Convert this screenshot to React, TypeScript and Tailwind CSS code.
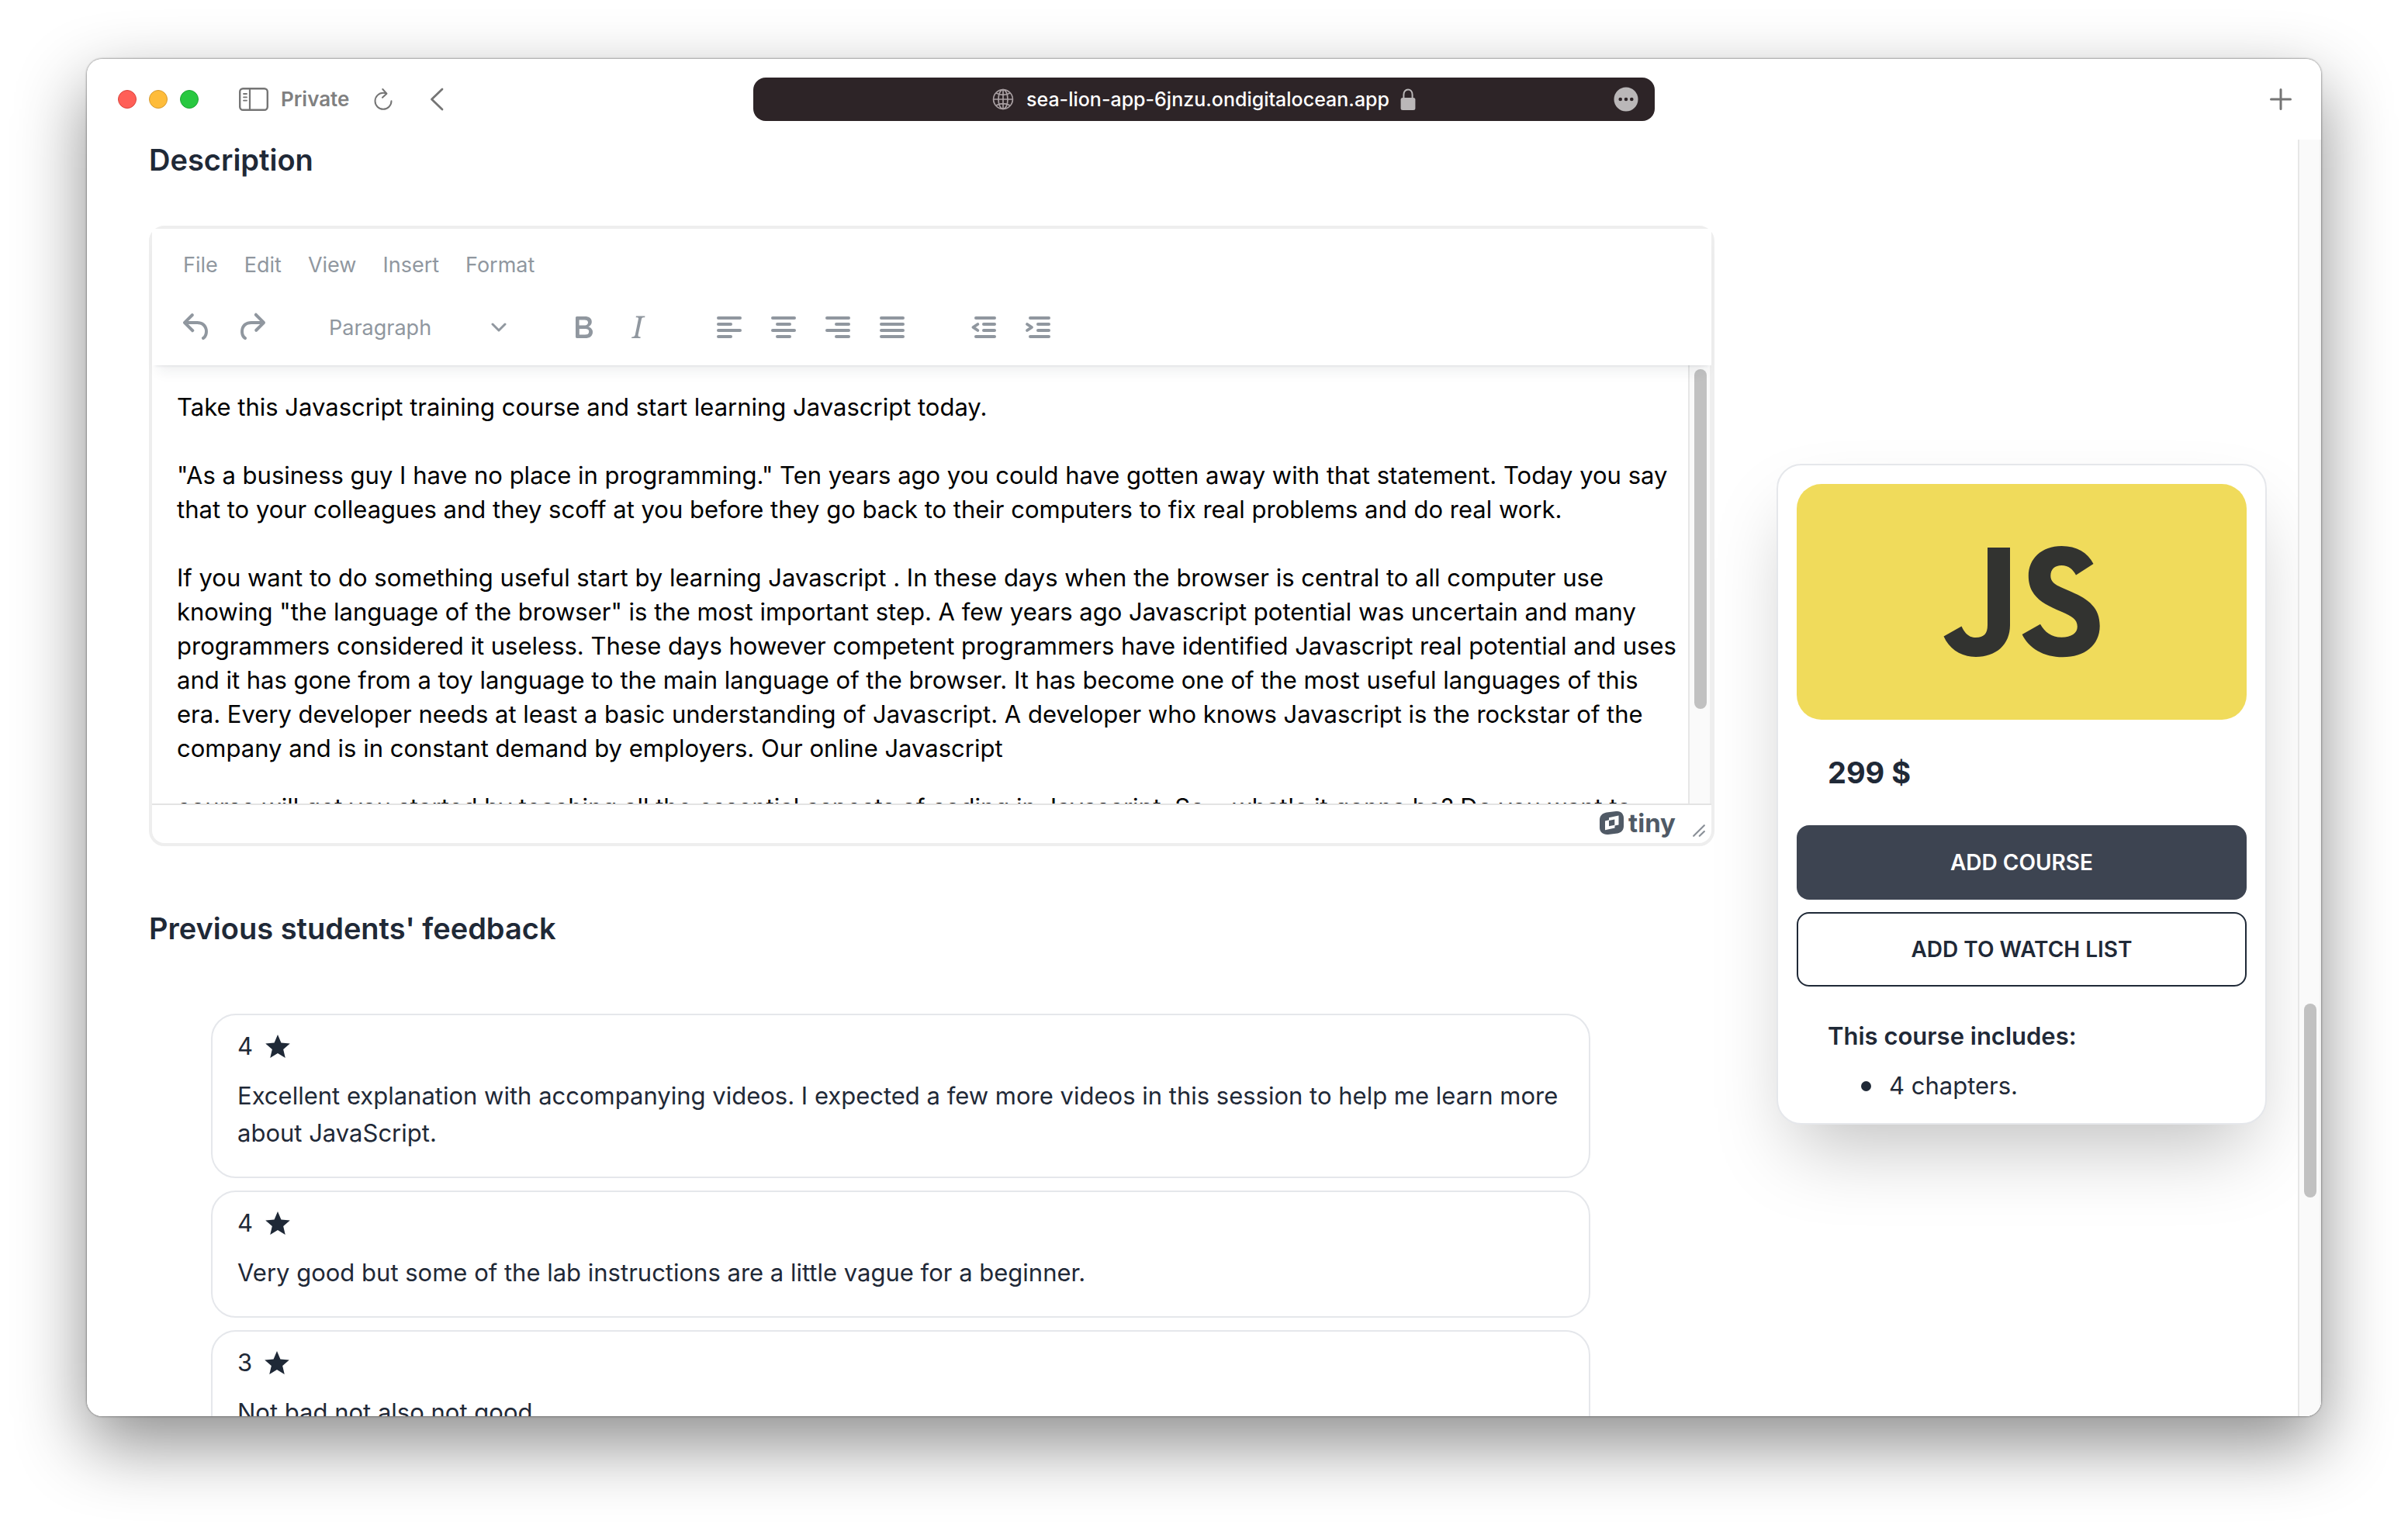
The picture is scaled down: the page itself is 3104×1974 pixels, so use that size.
import React from "react";

type Review = { rating: number; lines: string[] };

const reviews: Review[] = [
  {
    rating: 4,
    lines: [
      "Excellent explanation with accompanying videos. I expected a few more videos in this session to help me learn more",
      "about JavaScript.",
    ],
  },
  { rating: 4, lines: ["Very good but some of the lab instructions are a little vague for a beginner."] },
  { rating: 3, lines: ["Not bad not also not good."] },
];

const firstParagraph = [
  "Take this Javascript training course and start learning Javascript today.",
  "",
  "\"As a business guy I have no place in programming.\" Ten years ago you could have gotten away with that statement. Today you say",
  "that to your colleagues and they scoff at you before they go back to their computers to fix real problems and do real work.",
  "",
  "If you want to do something useful start by learning Javascript . In these days when the browser is central to all computer use",
  "knowing \"the language of the browser\" is the most important step. A few years ago Javascript potential was uncertain and many",
  "programmers considered it useless. These days however competent programmers have identified Javascript real potential and uses",
  "and it has gone from a toy language to the main language of the browser. It has become one of the most useful languages of this",
  "era. Every developer needs at least a basic understanding of Javascript. A developer who knows Javascript is the rockstar of the",
  "company and is in constant demand by employers. Our online Javascript",
];

const secondParagraph = [
  "course will get you started by teaching all the essential aspects of coding in Javascript. So... what's it gonna be? Do you want to",
];

function Lines({ lines }: { lines: string[] }) {
  return (
    <>
      {lines.map((line, i) => (
        <React.Fragment key={i}>
          {i > 0 && <br />}
          {line}
        </React.Fragment>
      ))}
    </>
  );
}

function Bars({ rows }: { rows: [number, number][] }) {
  return (
    <>
      {rows.map(([x, w], i) => (
        <rect key={i} x={x} y={5 + i * 4} width={w} height="2" rx="1" />
      ))}
    </>
  );
}

function ToolButton({ label, children }: { label: string; children: React.ReactNode }) {
  return (
    <button type="button" aria-label={label} className="flex h-[70px] w-[70px] items-center justify-center">
      <svg viewBox="0 0 24 24" className="h-12 w-12" fill="currentColor">
        {children}
      </svg>
    </button>
  );
}

function TitleBar() {
  return (
    <header className="grid h-[104px] shrink-0 grid-cols-[1fr_1162px_1fr] items-center text-[#757575]">
      <div className="flex items-center pl-10">
        <div className="flex gap-4">
          <button type="button" aria-label="Close" className="h-6 w-6 rounded-full border border-[#d9453e] bg-[#ff5f57]" />
          <button type="button" aria-label="Minimize" className="h-6 w-6 rounded-full border border-[#d69b32] bg-[#febc3a]" />
          <button type="button" aria-label="Zoom" className="h-6 w-6 rounded-full border border-[#1fa335] bg-[#28c840]" />
        </div>
        <button type="button" className="ml-[52px] flex items-center gap-4">
          <svg viewBox="0 0 38 30" className="h-[30px] w-[38px]" fill="none" stroke="currentColor" strokeLinecap="round">
            <rect x="1.2" y="1.2" width="35.6" height="27.6" rx="4" strokeWidth="2.4" />
            <path d="M14 1.5V28.5" strokeWidth="2.2" />
            <path d="M6 8H10M6 12.3H10M6 16.6H10" strokeWidth="1.8" />
          </svg>
          <span className="text-[26px] leading-8 font-semibold text-[#808080]">Private</span>
        </button>
        <button type="button" aria-label="Reload" className="ml-8">
          <svg viewBox="0 0 24 28" className="h-7 w-6" fill="none" stroke="currentColor" strokeWidth="2" strokeLinecap="round" strokeLinejoin="round">
            <path d="M16 6.6C14.8 6.1 13.4 5.8 12 5.8A10.5 10.5 0 1 0 22.5 16.3" />
            <path d="M11.3 1L16.4 6.7L11 11.8" />
          </svg>
        </button>
        <button type="button" aria-label="Back" className="ml-12">
          <svg viewBox="0 0 18 30" className="h-[30px] w-[18px]" fill="none" stroke="currentColor" strokeWidth="2.8" strokeLinecap="round" strokeLinejoin="round">
            <path d="M16 2L2.5 15L16 28" />
          </svg>
        </button>
      </div>
      <div className="grid h-14 grid-cols-[1fr_auto_1fr] items-center rounded-2xl bg-[#2d2427] px-[21px] text-[#bab7b8]">
        <span />
        <div className="flex items-center">
          <svg viewBox="0 0 28 28" className="mr-4 h-7 w-7" fill="none" stroke="#a89fa2" strokeWidth="1.7">
            <circle cx="14" cy="14" r="12.4" />
            <ellipse cx="14" cy="14" rx="6" ry="12.4" />
            <path d="M14 1.6V26.4M1.6 14H26.4M5 6Q14 10.6 23 6M5 22Q14 17.4 23 22" />
          </svg>
          <input
            aria-label="Address"
            defaultValue="sea-lion-app-6jnzu.ondigitalocean.app"
            className="field-sizing-content bg-transparent text-[25px] leading-8 font-medium text-white outline-none"
          />
          <svg viewBox="0 0 20 28" className="ml-3.5 h-7 w-5">
            <path d="M4.4 13V8.2C4.4 4.4 6.6 1.6 10 1.6S15.6 4.4 15.6 8.2V13" fill="none" stroke="currentColor" strokeWidth="2" />
            <rect x="0.6" y="12" width="18.8" height="16" rx="2.5" fill="currentColor" />
          </svg>
        </div>
        <button type="button" aria-label="Page options" className="justify-self-end">
          <svg viewBox="0 0 32 32" className="h-8 w-8">
            <circle cx="16" cy="16" r="15.5" fill="currentColor" />
            <g fill="#2d2427">
              <circle cx="8.7" cy="16" r="2.3" />
              <circle cx="16" cy="16" r="2.3" />
              <circle cx="23.3" cy="16" r="2.3" />
            </g>
          </svg>
        </button>
      </div>
      <button type="button" aria-label="New tab" className="mr-[37px] justify-self-end">
        <svg viewBox="0 0 30 30" className="h-[30px] w-[30px]" fill="none" stroke="currentColor" strokeWidth="3" strokeLinecap="round">
          <path d="M15 2.5V27.5M2.5 15H27.5" />
        </svg>
      </button>
    </header>
  );
}

function EditorHeader() {
  return (
    <div className="relative z-10 h-44 shrink-0 bg-white text-[#90979f] shadow-[0_4px_4px_-4px_rgba(34,47,62,0.15),0_16px_16px_-8px_rgba(34,47,62,0.07)]">
      <nav className="flex h-[92px] items-center gap-[34px] pt-0.5 pl-10 text-[27px] leading-10">
        {["File", "Edit", "View", "Insert", "Format"].map((item) => (
          <button key={item} type="button">
            {item}
          </button>
        ))}
      </nav>
      <div className="flex h-[70px] items-center pl-[23px]">
        <ToolButton label="Undo">
          <path d="M6.4 8H12c3.7 0 6.2 2 6.8 5.1.6 2.7-.4 5.6-2.3 6.8a1 1 0 0 1-1-1.8c1.1-.6 1.8-2.7 1.4-4.6-.5-2.1-2.1-3.5-4.9-3.5H6.4l3.3 3.3a1 1 0 1 1-1.4 1.4l-5-5a1 1 0 0 1 0-1.4l5-5a1 1 0 0 1 1.4 1.4L6.4 8z" />
        </ToolButton>
        <ToolButton label="Redo">
          <path d="M17.6 10H12c-2.8 0-4.4 1.4-4.9 3.5-.4 2 .3 4 1.4 4.6a1 1 0 1 1-1 1.8c-2-1.2-2.9-4.1-2.3-6.8.6-3 3-5.1 6.8-5.1h5.6l-3.3-3.3a1 1 0 1 1 1.4-1.4l5 5a1 1 0 0 1 0 1.4l-5 5a1 1 0 0 1-1.4-1.4l3.3-3.3z" />
        </ToolButton>
        <label className="ml-[65px] grid w-[236px] items-center">
          <select
            aria-label="Block format"
            defaultValue="Paragraph"
            className="col-start-1 row-start-1 h-[68px] w-full appearance-none bg-transparent pt-0.5 text-[27px] leading-10 outline-none"
          >
            <option>Paragraph</option>
            <option>Heading 1</option>
            <option>Heading 2</option>
          </select>
          <svg viewBox="0 0 20 12" className="pointer-events-none col-start-1 row-start-1 mr-[7px] h-3 w-5 justify-self-end" fill="none" stroke="currentColor" strokeWidth="3" strokeLinecap="round" strokeLinejoin="round">
            <path d="M2 2L10 10L18 2" />
          </svg>
        </label>
        <div className="ml-[57px] flex">
          <ToolButton label="Bold">
            <path d="M7.8 19c-.3 0-.5 0-.6-.2l-.2-.5V5.7c0-.2 0-.4.2-.5l.6-.2h5c1.5 0 2.7.3 3.5 1 .7.6 1.1 1.4 1.1 2.5a3 3 0 0 1-.6 1.9c-.4.6-1 1-1.6 1.2.4.1.9.3 1.3.6s.8.7 1 1.2c.4.4.5 1 .5 1.6 0 1.3-.4 2.3-1.3 3-.8.7-2.1 1-3.8 1H7.8zm5-8.3c.6 0 1.2-.1 1.6-.5.4-.3.6-.7.6-1.3 0-1.1-.8-1.7-2.3-1.7H9.3v3.5h3.4zm.5 6c.7 0 1.3-.1 1.7-.4.4-.4.6-.9.6-1.5s-.2-1-.7-1.4c-.4-.3-1-.4-2-.4H9.4v3.8h4z" />
          </ToolButton>
          <ToolButton label="Italic">
            <path d="M16.7 4.7l-.1.9h-.3c-.6 0-1 0-1.4.3-.3.3-.4.6-.5 1.1l-2.1 9.8v.6c0 .5.4.8 1.4.8h.2l-.2.8H8l.2-.8h.2c1.1 0 1.8-.5 2-1.5l2-9.8.1-.5c0-.6-.4-.8-1.4-.8h-.3l.2-.9h5.8z" />
          </ToolButton>
        </div>
        <div className="ml-12 flex">
          <ToolButton label="Align left">
            <Bars rows={[[4, 16], [4, 10], [4, 16], [4, 10]]} />
          </ToolButton>
          <ToolButton label="Align center">
            <Bars rows={[[4, 16], [7, 10], [4, 16], [7, 10]]} />
          </ToolButton>
          <ToolButton label="Align right">
            <Bars rows={[[4, 16], [10, 10], [4, 16], [10, 10]]} />
          </ToolButton>
          <ToolButton label="Justify">
            <Bars rows={[[4, 16], [4, 16], [4, 16], [4, 16]]} />
          </ToolButton>
        </div>
        <div className="ml-12 flex">
          <ToolButton label="Decrease indent">
            <Bars rows={[[6, 14], [11, 9], [11, 9], [6, 14]]} />
            <path d="M8.2 10L5.2 12L8.2 14" fill="none" stroke="currentColor" strokeWidth="1.9" strokeLinecap="round" strokeLinejoin="round" />
          </ToolButton>
          <ToolButton label="Increase indent">
            <Bars rows={[[6, 14], [11, 9], [11, 9], [6, 14]]} />
            <path d="M5 10L8 12L5 14" fill="none" stroke="currentColor" strokeWidth="1.9" strokeLinecap="round" strokeLinejoin="round" />
          </ToolButton>
        </div>
      </div>
    </div>
  );
}

function Editor() {
  return (
    <div className="flex h-[800px] flex-col rounded-[20px] border-4 border-[#eeeeee]">
      <EditorHeader />
      <div className="flex min-h-0 flex-1">
        <div className="min-w-0 flex-1 overflow-hidden px-8 pt-8 text-[31px] leading-[44px] whitespace-nowrap text-black">
          <p>
            <Lines lines={firstParagraph} />
          </p>
          <p className="mt-8">
            <Lines lines={secondParagraph} />
          </p>
        </div>
        <div className="w-[30px] border-x-2 border-[#e7e7e7] border-r-[#eeeeee] bg-[#fafafa] pt-[5px] pl-1.5">
          <div className="h-[438px] w-4 rounded-full bg-[#c1c1c1]" />
        </div>
      </div>
      <div className="flex h-[51px] shrink-0 items-center justify-end border-t-2 border-[#e3e3e3] pr-2 pb-1">
        <a href="#tiny" className="mr-[22px] flex items-center gap-1.5 text-[#505a66]">
          <svg viewBox="0 0 31 30" className="h-[30px] w-[31px]">
            <path d="M9 1.4L21 0C27 -0.4 31 3 31 9V19C31 24 28 27.6 23 28.4L11 29.9C4.5 30.5 0 27 0 21V11C0 6 3.5 2.2 9 1.4Z" fill="currentColor" />
            <path d="M12 8.2L24.5 5.5V17.5L19.5 18.6V21.6L7 24.2V12.4L12 11.3Z" fill="#ffffff" />
            <path d="M12 12L19.3 10.5V17.8L12 19.2Z" fill="currentColor" />
          </svg>
          <span className="text-[33px] leading-10 font-bold">tiny</span>
        </a>
        <svg viewBox="0 0 16 16" className="mt-5 h-4 w-4" fill="none" stroke="#8a9098" strokeWidth="2.2" strokeLinecap="round">
          <path d="M1.2 14.8L14.8 1.2M8.8 14.8L14.8 9" />
        </svg>
      </div>
    </div>
  );
}

function ReviewCard({ review }: { review: Review }) {
  return (
    <li className="rounded-[32px] border-2 border-[#e5e7eb] px-8 pt-4 pb-8">
      <div className="flex items-center gap-4">
        <span>{review.rating}</span>
        <svg viewBox="2 2 20 19" className="h-[30px] w-8" fill="currentColor" role="img" aria-label="stars">
          <path d="M12 17.27L18.18 21l-1.64-7.03L22 9.24l-7.19-.61L12 2 9.19 8.63 2 9.24l5.46 4.73L5.82 21z" />
        </svg>
      </div>
      <p className="mt-4 whitespace-nowrap">
        <Lines lines={review.lines} />
      </p>
    </li>
  );
}

function CourseCard() {
  return (
    <aside className="mt-[418px] mr-10 w-[632px] shrink-0 self-start rounded-[32px] border-2 border-[#e5e7eb] bg-white p-6 shadow-[0_50px_100px_-24px_rgba(0,0,0,0.25)]">
      <div className="flex h-[304px] items-center justify-center rounded-[32px] bg-[#f0db5b]">
        <svg viewBox="0 0 214 152" className="h-[152px] w-[214px]" fill="#323330" role="img" aria-label="JavaScript">
          <path d="M63 6H92V106C92 131 74 147 48 147C29 147 14 137 6.5 120.5L29.5 107.5C34 117 39 122 48 122C58 122 63 117 63 106Z" />
          <path d="M158.5 4C178 4 192 12.500 199.500 27L177 41.500C173 34 167.500 29 158.500 29C149.500 29 144.300 34 144.300 42.500C144.300 49.500 149 53.500 159.500 58L171 63C194 73 207.700 84 207.700 107C207.700 132 188 147.300 160 147.300C135 147.300 116 135.500 107.600 118L131 104.700C137 115 145 121.700 158.500 121.700C171 121.700 178.800 116.500 178.800 108C178.800 98.500 171.500 94.500 159 89L152.500 86.200C131 77 115.800 66 115.800 42.500C115.800 20.500 132.500 4 158.500 4Z" />
        </svg>
      </div>
      <p className="mt-10 px-10 text-[38px] leading-[56px] font-bold">299 $</p>
      <div className="mt-10 flex flex-col gap-4 text-[28px] font-semibold">
        <button type="button" className="h-24 rounded-2xl bg-[#3d4451] text-white uppercase">
          Add course
        </button>
        <button type="button" className="h-24 rounded-2xl border-2 border-[#1f2937] uppercase">
          Add to watch list
        </button>
      </div>
      <h3 className="mt-10 px-10 font-semibold">This course includes:</h3>
      <ul className="mt-4 px-10">
        <li className="flex items-center gap-[23px] pl-[43px]">
          <span className="h-[13px] w-[13px] rounded-full bg-[#1f2937]" />
          4 chapters.
        </li>
      </ul>
    </aside>
  );
}

export default function App() {
  return (
    <div className="h-screen overflow-hidden bg-white px-28 pt-[76px] pb-[148px] font-['Inter',sans-serif] text-[31px] leading-[48px] text-[#1f2937]">
      <div className="h-full rounded-[20px] shadow-[0_0_2px_1px_rgba(0,0,0,0.3),0_36px_90px_rgba(0,0,0,0.45)]">
        <div className="flex h-full flex-col overflow-hidden rounded-[20px] bg-white">
          <TitleBar />
          <div className="flex min-h-0 flex-1">
            <main className="flex min-w-0 flex-1 gap-20 overflow-hidden pl-20">
              <div className="min-w-0 flex-1">
                <h2 className="text-[38px] leading-[52px] font-semibold">Description</h2>
                <div className="mt-[59px]">
                  <Editor />
                </div>
                <h2 className="mt-20 text-[38px] leading-[52px] font-semibold">Previous students' feedback</h2>
                <ul className="mt-[84px] flex flex-col gap-4 pr-40 pl-20">
                  {reviews.map((review, i) => (
                    <ReviewCard key={i} review={review} />
                  ))}
                </ul>
              </div>
              <CourseCard />
            </main>
            <div className="flex w-[30px] shrink-0 flex-col border-x-2 border-[#e7e7e7] border-r-[#f3f3f3] bg-[#fafafa] pl-1.5">
              <div className="mt-[1114px] h-[250px] w-4 rounded-full bg-[#c1c1c1]" />
            </div>
          </div>
        </div>
      </div>
    </div>
  );
}
